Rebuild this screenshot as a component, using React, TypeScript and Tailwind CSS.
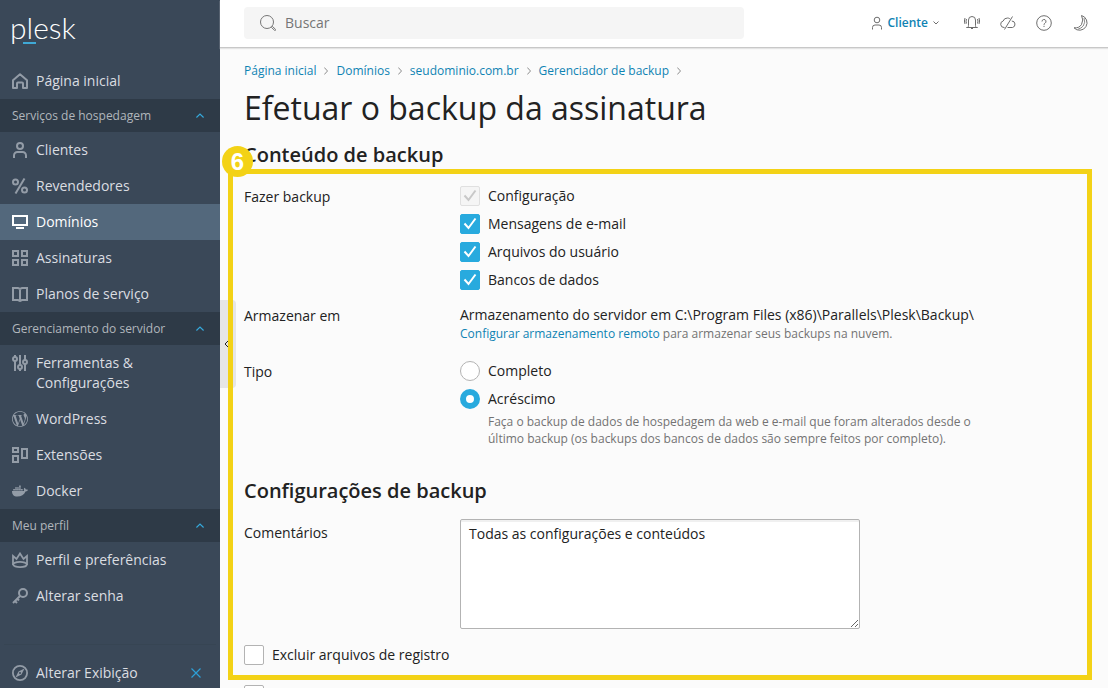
import { Fragment, useState } from "react";
import type { ReactNode } from "react";
import { FaDocker } from "react-icons/fa";
import { SiWordpress } from "react-icons/si";

const Icon = ({ children, className = "" }: { children: ReactNode; className?: string }) => (
  <svg
    viewBox="0 0 16 16"
    fill="none"
    stroke="currentColor"
    strokeWidth="2"
    className={`size-4 shrink-0 ${className}`}
    aria-hidden="true"
  >
    {children}
  </svg>
);

const icons = {
  home: (
    <Icon>
      <path d="M1 7.2 8 1.2l7 6V15h-4v-4.5a1 1 0 0 0-1-1H6a1 1 0 0 0-1 1V15H1z" strokeLinejoin="round" />
    </Icon>
  ),
  user: (
    <Icon>
      <circle cx="8" cy="4" r="3" />
      <path d="M2 16v-2.5A3.5 3.5 0 0 1 5.5 10h5a3.5 3.5 0 0 1 3.5 3.5V16" />
    </Icon>
  ),
  percent: (
    <Icon>
      <circle cx="3.5" cy="4" r="2.5" />
      <circle cx="12.5" cy="12" r="2.5" />
      <path d="M12.5.5l-9 15" />
    </Icon>
  ),
  screen: (
    <Icon>
      <path d="M1 2h14v9H1zM4 14h8" />
    </Icon>
  ),
  grid: (
    <Icon>
      <path d="M1 1h5v5H1zM10 1h5v5h-5zM1 10h5v5H1zM10 10h5v5h-5z" />
    </Icon>
  ),
  book: (
    <Icon>
      <path d="M1 2h5l2 1 2-1h5v12h-5l-2 1-2-1H1zM8 3v12" />
    </Icon>
  ),
  sliders: (
    <Icon>
      <circle cx="3" cy="4" r="2" />
      <circle cx="8" cy="12" r="2" />
      <circle cx="13" cy="7" r="2" />
      <path d="M3 0v2M3 6v10M8 0v10M8 14v2M13 0v5M13 9v7" />
    </Icon>
  ),
  wordpress: <SiWordpress className="size-4 shrink-0" />,
  blocks: (
    <Icon>
      <path d="M1 1h5v4H1zM10 2h5v9h-5zM1 9h5v6H1z" />
    </Icon>
  ),
  docker: <FaDocker className="size-4 shrink-0" />,
  crown: (
    <Icon>
      <path d="M1 13V4l3.5 3L8 1.5 11.5 7 15 4v9" strokeWidth="1.8" />
      <ellipse cx="8" cy="12.5" rx="6.8" ry="2.6" strokeWidth="1.8" />
    </Icon>
  ),
  key: (
    <Icon>
      <circle cx="11" cy="5" r="4" />
      <path d="M8 8l-7 7M2.5 12.5l2.5 2.5M5 10.5l2 2" />
    </Icon>
  ),
  compass: (
    <Icon>
      <circle cx="8" cy="8" r="7.1" strokeWidth="1.8" />
      <path d="M12.5 3.5 9.5 9.5l-6 3 3-6z" fill="currentColor" stroke="none" />
      <circle cx="8" cy="8" r="1" fill="#3a4858" stroke="none" />
    </Icon>
  ),
};

type NavItem = { icon: keyof typeof icons; label: string; active?: boolean };

const groups: { title: string; items: NavItem[] }[] = [
  {
    title: "Serviços de hospedagem",
    items: [
      { icon: "user", label: "Clientes" },
      { icon: "percent", label: "Revendedores" },
      { icon: "screen", label: "Domínios", active: true },
      { icon: "grid", label: "Assinaturas" },
      { icon: "book", label: "Planos de serviço" },
    ],
  },
  {
    title: "Gerenciamento do servidor",
    items: [
      { icon: "sliders", label: "Ferramentas & Configurações" },
      { icon: "wordpress", label: "WordPress" },
      { icon: "blocks", label: "Extensões" },
      { icon: "docker", label: "Docker" },
    ],
  },
  {
    title: "Meu perfil",
    items: [
      { icon: "crown", label: "Perfil e preferências" },
      { icon: "key", label: "Alterar senha" },
    ],
  },
];

const breadcrumbs = ["Página inicial", "Domínios", "seudominio.com.br", "Gerenciador de backup"];

function NavLink({ icon, label, active }: NavItem) {
  return (
    <a
      href="#"
      aria-current={active ? "page" : undefined}
      className={`flex items-start gap-2 py-2 pr-12 pl-3 text-sm leading-5 ${
        active ? "bg-[#53687c] text-white" : "text-[#dadde1]"
      }`}
    >
      <span className={`mt-[2px] ${active ? "text-white" : "text-[#939ca7]"}`}>{icons[icon]}</span>
      <span>{label}</span>
    </a>
  );
}

function Sidebar() {
  return (
    <aside className="flex w-[220px] shrink-0 flex-col bg-[#3a4858]">
      <div className="h-[63px] shrink-0 pt-[11px] pl-[10px]">
        <a
          href="#"
          className="relative inline-block font-['Lato',sans-serif] text-[30px] leading-8 font-light text-white"
        >
          plesk
          <span className="absolute top-[31px] left-[13px] h-[2px] w-[13px] bg-[#3fa9d6]" />
        </a>
      </div>
      <nav>
        <NavLink icon="home" label="Página inicial" />
        {groups.map((group) => (
          <div key={group.title}>
            <button
              type="button"
              className="flex h-[33px] w-full items-center justify-between bg-[#2e3a47] pr-4 pl-3 text-xs text-[#b1b6bc]"
            >
              {group.title}
              <svg viewBox="0 0 8 5" className="h-[5px] w-2" fill="none" stroke="#35a9dc" aria-hidden="true">
                <path d="M.4 4.5 4 1l3.6 3.5" strokeWidth="1.2" />
              </svg>
            </button>
            {group.items.map((item) => (
              <NavLink key={item.label} {...item} />
            ))}
          </div>
        ))}
      </nav>
      <div className="mx-1 mt-auto flex items-center border-t border-[#374553] pt-[18px] pb-[5px]">
        <a href="#" className="flex grow items-center gap-2 pl-2 text-sm leading-5 text-[#dadde1]">
          <span className="text-[#939ca7]">{icons.compass}</span>
          Alterar Exibição
        </a>
        <button type="button" aria-label="Fechar" className="mr-[14px] text-[#2d9fd6]">
          <svg viewBox="0 0 12 12" className="size-3" fill="none" stroke="currentColor" strokeWidth="1.2">
            <path d="M1.5 1.5l9 9M10.5 1.5l-9 9" />
          </svg>
        </button>
      </div>
    </aside>
  );
}

function TopBar() {
  return (
    <header className="flex h-12 shrink-0 items-center justify-between border-b border-[#c8c8c8] bg-white pr-5 pb-px pl-6 shadow-[0_1px_1px_#e4e4e4]">
      <label className="flex h-8 w-[500px] items-center gap-[9px] rounded bg-[#f5f5f5] px-4 text-[#767676]">
        <Icon>
          <circle cx="7" cy="7" r="6.5" strokeWidth="1" />
          <path d="M11.5 12.5l1-1 3 2.8a.7.7 0 0 1-1 1z" strokeWidth="1" />
        </Icon>
        <input
          type="search"
          placeholder="Buscar"
          aria-label="Buscar"
          className="w-full bg-transparent text-sm leading-5 outline-none placeholder:text-[#767676]"
        />
      </label>
      <div className="flex items-center gap-5 text-[#6e6e6e]">
        <button type="button" className="mr-[5px] flex items-center text-xs font-semibold text-[#0f83b3]">
          <svg viewBox="0 0 12 14" className="mr-[5px] h-[14px] w-3 text-[#6e6e6e]" fill="none" stroke="currentColor">
            <circle cx="6" cy="4" r="2.8" />
            <path d="M1.5 13.5v-2a2.5 2.5 0 0 1 2.5-2.5h4a2.5 2.5 0 0 1 2.5 2.5v2" />
          </svg>
          Cliente
          <svg viewBox="0 0 6 4" className="ml-[5px] h-1 w-[6px] text-[#6e6e6e]" fill="none" stroke="currentColor">
            <path d="M.5.5 3 3 5.5.5" />
          </svg>
        </button>
        <button type="button" aria-label="Notificações">
          <Icon>
            <g strokeWidth="1">
              <path d="M2.5 12.5h1q1-.5 1-2V5a3.5 3.5 0 0 1 7 0v5.5q0 1.5 1 2h1zM7 13.5h2" />
              <path d="M2.5 4q-1 2 0 4.500M13.500 4q1 2 0 4.500M1 3q-1.200 3 0 6M15 3q1.200 3 0 6" />
            </g>
          </Icon>
        </button>
        <button type="button" aria-label="Nuvem">
          <Icon>
            <g strokeWidth="1">
              <path d="M4.5 12.500H4a3.300 3.300 0 0 1-.8-6.500Q4 3 7.500 3q1.300 0 2.300.7M11.800 6a3.300 3.300 0 0 1 .7 6.500H7.500" />
              <path d="M12.500 1.500l-8 13" />
            </g>
          </Icon>
        </button>
        <button type="button" aria-label="Ajuda">
          <Icon>
            <g strokeWidth="1">
              <circle cx="8" cy="8" r="7.300" />
              <path d="M6 6.500a2 2 0 1 1 3 1.700q-1 .5-1 1.600M8 10.800v1.200" />
            </g>
          </Icon>
        </button>
        <button type="button" aria-label="Modo escuro">
          <Icon>
            <g strokeWidth="1">
              <path d="M9.500.5A7.500 7.500 0 1 1 2 12.800q5 .7 7.500-3.300 2.500-4.500 0-9z" />
              <path d="M12 3q1.800 4.500-.8 8-2 2.500-5 3" strokeWidth=".8" />
            </g>
          </Icon>
        </button>
      </div>
    </header>
  );
}

type CheckboxProps = { label?: string; name?: string; defaultChecked?: boolean; disabled?: boolean };

function Checkbox({ label, name, defaultChecked, disabled }: CheckboxProps) {
  return (
    <label className="flex items-center gap-2">
      <span className="grid size-5 shrink-0">
        <input
          type="checkbox"
          name={name}
          aria-label={label ?? name}
          defaultChecked={defaultChecked}
          disabled={disabled}
          className="peer col-start-1 row-start-1 size-5 appearance-none rounded-xs border border-[#b3b3b3] bg-white checked:border-[#28aade] checked:bg-[#28aade] disabled:border-[#e0e0e0] disabled:bg-[#f5f5f5]"
        />
        <svg
          viewBox="0 0 20 20"
          className="pointer-events-none invisible col-start-1 row-start-1 size-5 text-white peer-checked:visible peer-disabled:text-[#c8c8c8]"
          fill="none"
          stroke="currentColor"
          strokeWidth="2"
        >
          <path d="M4.500 9.500l4 4.500 7-9.500" />
        </svg>
      </span>
      {label}
    </label>
  );
}

function Radio({ label, ...props }: { label: string; checked: boolean; onChange: () => void }) {
  return (
    <label className="flex items-center gap-2">
      <input
        type="radio"
        name="type"
        {...props}
        className="size-5 shrink-0 appearance-none rounded-full border border-[#b3b3b3] bg-white checked:border-[6px] checked:border-[#28aade]"
      />
      {label}
    </label>
  );
}

function Field({ label, htmlFor, children }: { label: string; htmlFor?: string; children: ReactNode }) {
  const LabelTag = htmlFor ? "label" : "div";
  return (
    <div className="flex">
      <LabelTag htmlFor={htmlFor} className={`w-[216px] shrink-0 ${htmlFor ? "pt-1" : "pt-px"}`}>
        {label}
      </LabelTag>
      <div className="min-w-0 grow">{children}</div>
    </div>
  );
}

function BackupForm() {
  const [type, setType] = useState("incremental");

  return (
    <form className="relative px-6 pt-[13px]">
      <h2 className="text-xl leading-7 font-semibold">Conteúdo de backup</h2>
      <div className="mt-[17px] flex flex-col gap-[15px]">
        <Field label="Fazer backup">
          <div className="flex flex-col gap-2">
            <Checkbox label="Configuração" defaultChecked disabled />
            <Checkbox label="Mensagens de e-mail" defaultChecked />
            <Checkbox label="Arquivos do usuário" defaultChecked />
            <Checkbox label="Bancos de dados" defaultChecked />
          </div>
        </Field>
        <Field label="Armazenar em">
          <p>Armazenamento do servidor em C:\Program Files (x86)\Parallels\Plesk\Backup\</p>
          <p className="text-xs leading-[17px] text-[#737373]">
            <a href="#" className="text-[#0f83b3]">
              Configurar armazenamento remoto
            </a>{" "}
            para armazenar seus backups na nuvem.
          </p>
        </Field>
        <div className="mt-1">
          <Field label="Tipo">
            <div className="flex flex-col gap-2">
              <Radio label="Completo" checked={type === "full"} onChange={() => setType("full")} />
              <Radio label="Acréscimo" checked={type === "incremental"} onChange={() => setType("incremental")} />
            </div>
            <p className="mt-1 ml-7 max-w-[500px] text-xs leading-[17px] text-[#737373]">
              Faça o backup de dados de hospedagem da web e e-mail que foram alterados desde o último backup (os
              backups dos bancos de dados são sempre feitos por completo).
            </p>
          </Field>
        </div>
      </div>

      <h2 className="mt-[30px] text-xl leading-7 font-semibold">Configurações de backup</h2>
      <div className="mt-[14px]">
        <Field label="Comentários" htmlFor="comments">
          <textarea
            id="comments"
            defaultValue="Todas as configurações e conteúdos"
            className="block h-[110px] w-[400px] max-w-full rounded-xs border border-[#b3b3b3] bg-white px-2 py-1 shadow-[inset_0_2px_0_#f0f0f0] outline-none"
          />
        </Field>
      </div>
      <div className="mt-4 flex flex-col items-start gap-5">
        <Checkbox label="Excluir arquivos de registro" />
        <Checkbox name="exclude-files" />
      </div>

      {/* Highlighted step */}
      <div className="pointer-events-none absolute top-[41px] right-4 bottom-[25px] left-2 border-[5px] border-[#f3d216]">
        <span className="absolute -top-7 -left-[11px] flex size-[31px] items-center justify-center rounded-full bg-[#f3d216] font-['Liberation_Sans',Arial,sans-serif] text-2xl font-bold text-white">
          6
        </span>
      </div>
    </form>
  );
}

export default function App() {
  return (
    <div className="flex h-screen overflow-hidden bg-[#fbfbfb] font-['Open_Sans',sans-serif] text-sm leading-5 text-[#222222]">
      <Sidebar />
      <div className="relative flex min-w-0 grow flex-col">
        <TopBar />
        <button
          type="button"
          aria-label="Recolher menu"
          className="absolute top-1/2 left-0 flex h-[88px] w-4 -translate-y-1/2 items-center rounded-r bg-[#e6e6e6] pl-1"
        >
          <svg viewBox="0 0 5 8" className="h-2 w-[5px]" fill="none" stroke="#222222" aria-hidden="true">
            <path d="M4 1 1 4l3 3" />
          </svg>
        </button>
        <main className="min-h-0 grow overflow-hidden pt-[15px]">
          <nav aria-label="Breadcrumb" className="flex items-center gap-2 px-6 text-xs leading-4">
            {breadcrumbs.map((crumb) => (
              <Fragment key={crumb}>
                <a href="#" className="text-[#0f83b3]">
                  {crumb}
                </a>
                <svg viewBox="0 0 4 8" className="h-2 w-1" fill="none" stroke="#8c8c8c" aria-hidden="true">
                  <path d="M.3.5 3.500 4 .3 7.500" />
                </svg>
              </Fragment>
            ))}
          </nav>
          <h1 className="mt-[9px] px-6 text-[32px] leading-10 font-normal">Efetuar o backup da assinatura</h1>
          <BackupForm />
        </main>
      </div>
    </div>
  );
}
